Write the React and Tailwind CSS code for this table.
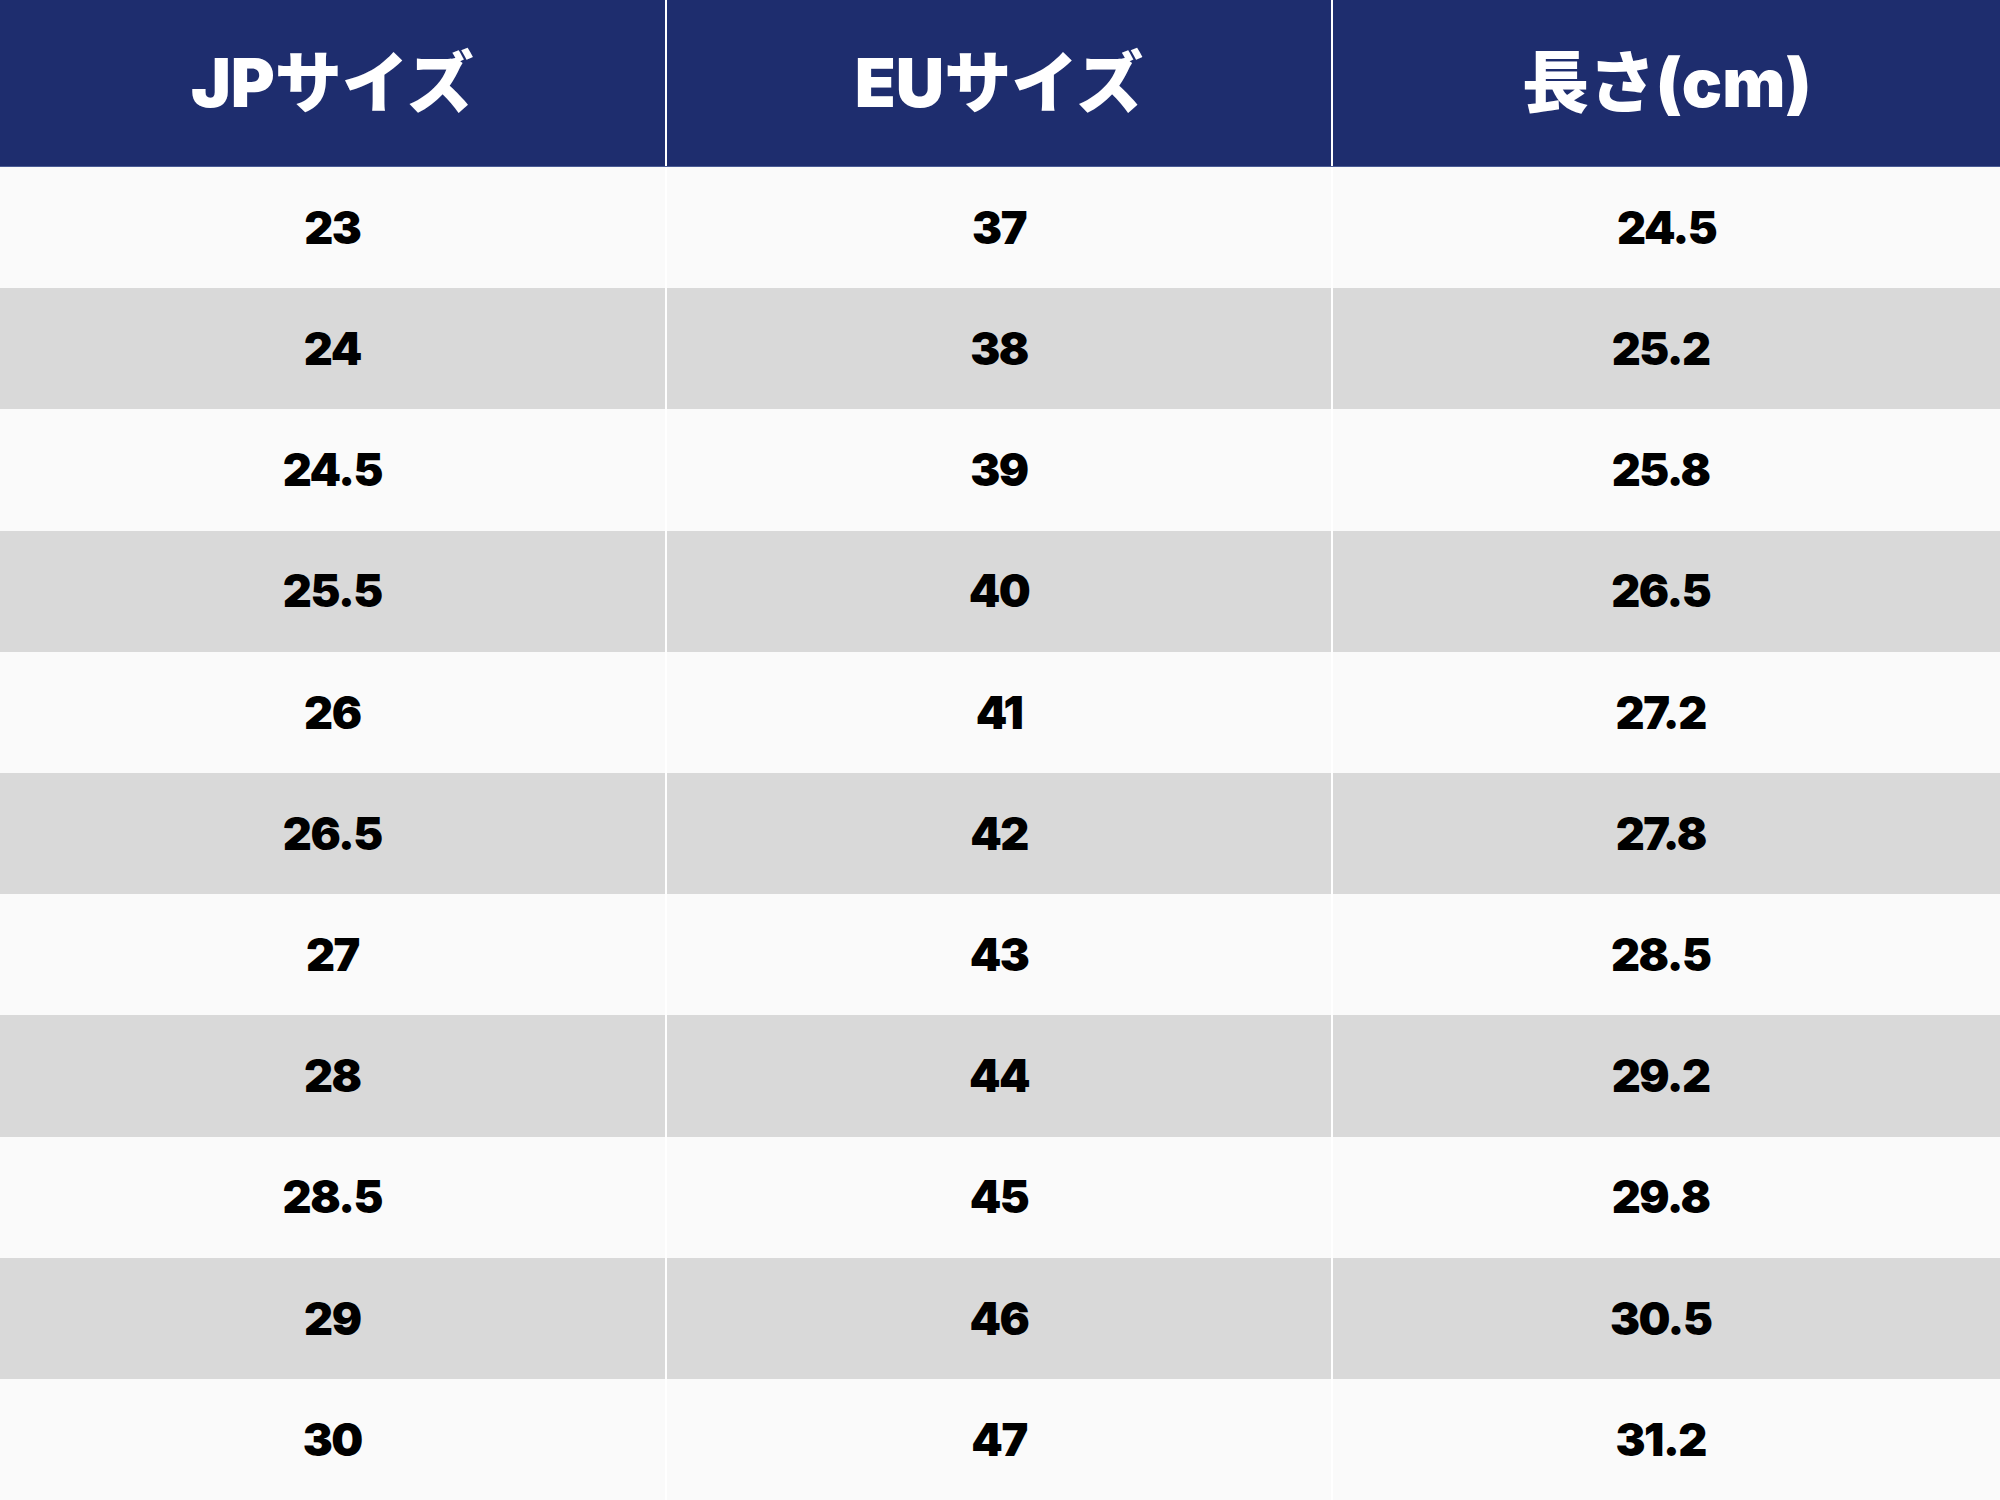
import React from 'react';

const rows = [
    ['23', '37', '24.5'],
    ['24', '38', '25.2'],
    ['24.5', '39', '25.8'],
    ['25.5', '40', '26.5'],
    ['26', '41', '27.2'],
    ['26.5', '42', '27.8'],
    ['27', '43', '28.5'],
    ['28', '44', '29.2'],
    ['28.5', '45', '29.8'],
    ['29', '46', '30.5'],
    ['30', '47', '31.2'],
];

const headFont = "font-['Inter','Noto_Sans_CJK_JP',sans-serif]";

const App = () => {
    return (
        <div className="w-[2000px] h-[1500px] flex flex-col bg-[#fafafa] overflow-hidden">
            <div className="h-[167px] shrink-0 grid grid-cols-3 bg-[#1e2d6e] border-b border-[#4a5b94]">
                {['JPサイズ', 'EUサイズ', '長さ(cm)'].map((h, i) => (
                    <div
                        key={h}
                        className={`flex items-center justify-center text-white text-[67px] font-black ${headFont} ${i < 2 ? 'border-r-2 border-white' : ''}`}
                    >
                        {h}
                    </div>
                ))}
            </div>
            <div className="flex-1 flex flex-col">
                {rows.map((r, ri) => (
                    <div
                        key={ri}
                        className={`flex-1 grid grid-cols-3 ${ri % 2 === 0 ? 'bg-[#fafafa]' : 'bg-[#d9d9d9]'}`}
                    >
                        {r.map((v, ci) => (
                            <div
                                key={ci}
                                className={`flex items-center justify-center text-black text-[45px] font-black tracking-[-1.5px] font-['Inter',sans-serif] ${ci < 2 ? 'border-r-2 border-white' : ''} ${ci === 2 && ri > 0 ? 'pr-3' : ''}`}
                            >
                                {v}
                            </div>
                        ))}
                    </div>
                ))}
            </div>
        </div>
    );
};

export default App;
